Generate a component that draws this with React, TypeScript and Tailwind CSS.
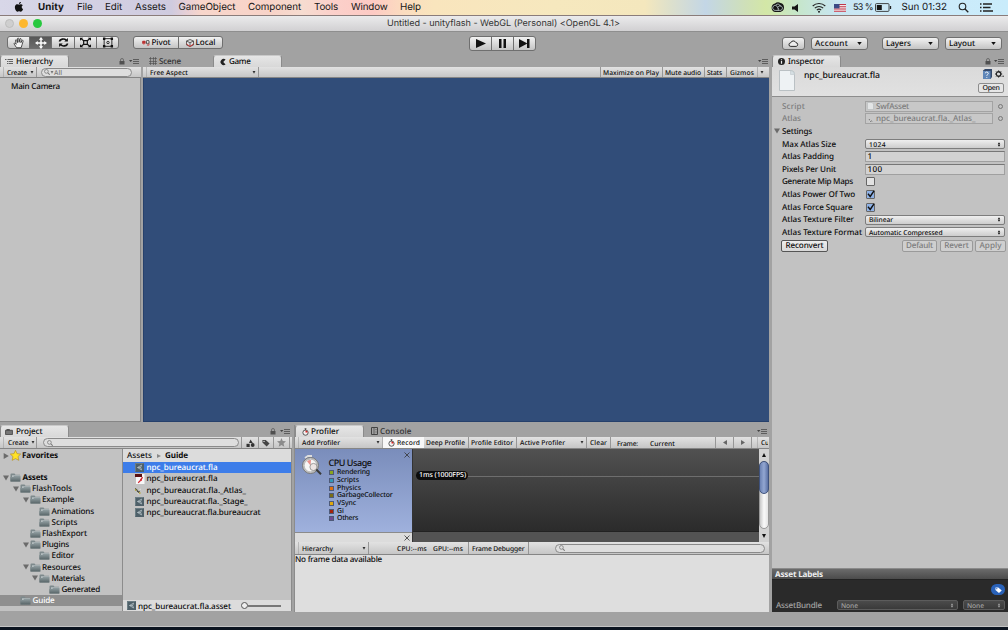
import { useLayoutEffect, useRef, useState, type ReactNode } from "react";
import clsx from "clsx";

/* One line of text whose tracking is computed so that it fills `w` pixels. */
function L({ w, children, className }: { w: number; children: string; className?: string }) {
  const ref = useRef<HTMLSpanElement>(null);
  const [gap, setGap] = useState(0);
  useLayoutEffect(() => {
    if (ref.current) {
      const natural = ref.current.getBoundingClientRect().width;
      setGap((w - natural) / children.length);
    }
  }, [w, children]);
  return (
    <span className={clsx("block shrink-0 whitespace-pre", className)} style={{ width: w, letterSpacing: gap }}>
      <span ref={ref}>{children}</span>
    </span>
  );
}

const Sep = ({ className }: { className?: string }) => (
  <i className={clsx("h-full w-px shrink-0 bg-[#969696]", className)} />
);

function Caret({ className }: { className?: string }) {
  return (
    <svg viewBox="0 0 6 5" className={clsx("h-[3px] w-[4px] shrink-0", className)}>
      <path d="M.6 0h4.800L3 4.400z" fill="#333" />
    </svg>
  );
}

function Lock({ className }: { className?: string }) {
  return (
    <svg viewBox="0 0 6 7" className={clsx("h-[7px] w-[6px] shrink-0", className)}>
      <path d="M1.500 3V2a1.500 1.500 0 0 1 3 0v1" fill="none" stroke="#666" strokeWidth=".9" />
      <rect x=".5" y="3" width="5" height="3.500" fill="#505050" />
    </svg>
  );
}

function PaneMenu({ className }: { className?: string }) {
  return (
    <svg viewBox="0 0 10 6" className={clsx("h-[6px] w-[10px] shrink-0", className)}>
      <path d="M0 2h3.400L1.700 4z" fill="#444" />
      <path d="M4 1.500h6M4 3.500h6M4 5.500h6" stroke="#555" strokeWidth=".9" />
    </svg>
  );
}

function Magnifier({ className }: { className?: string }) {
  return (
    <svg viewBox="0 0 8 8" className={clsx("h-[6px] w-[6px] shrink-0", className)}>
      <circle cx="3.200" cy="3.200" r="2.500" fill="none" stroke="#777" />
      <path d="M5 5l2.600 2.600" stroke="#777" strokeWidth="1.400" />
    </svg>
  );
}

function Tab({ children, className }: { children: ReactNode; className?: string }) {
  return (
    <div
      className={clsx(
        "flex h-full shrink-0 items-center rounded-t-[3px] border-x border-t border-[#8b8b8b] border-t-[#c9c9c9] bg-linear-to-b from-[#e6e6e6] to-[#d8d8d8]",
        className,
      )}
    >
      {children}
    </div>
  );
}

function ToolRow({ children, className }: { children?: ReactNode; className?: string }) {
  return (
    <div
      className={clsx(
        "flex shrink-0 items-center border-b border-[#858585] bg-linear-to-b from-[#e2e2e2] to-[#c6c6c6] text-[6.700px]",
        className,
      )}
    >
      {children}
    </div>
  );
}

function AppleIcon() {
  return (
    <svg viewBox="0 0 24 28" className="ml-[14px] h-[11px] w-[11px]">
      <path d="M17.2 14.9c0-2.7 2.2-4 2.3-4.1-1.300-1.800-3.200-2.100-3.900-2.100-1.700-.2-3.200 1-4.100 1-.8 0-2.100-1-3.500-.9-1.800 0-3.500 1-4.400 2.600-1.900 3.300-.5 8.100 1.300 10.800.9 1.300 2 2.700 3.400 2.700s1.900-.9 3.500-.9 2.100.9 3.500.8c1.500 0 2.400-1.300 3.300-2.600 1-1.500 1.500-2.900 1.500-3-.1 0-2.900-1.100-2.900-4.300zM14.500 7c.7-.9 1.200-2.100 1.100-3.400-1.100.1-2.400.7-3.100 1.600-.7.8-1.300 2-1.100 3.200 1.200.1 2.400-.6 3.100-1.400z" fill="#111" transform="translate(-3 -5) scale(1.2)" />
    </svg>
  );
}

function MenuBar() {
  return (
    <header className="flex h-[16px] shrink-0 items-center border-b border-[#8a7c7a] bg-[linear-gradient(90deg,#d8d7e8_0%,#cfcbdf_17%,#e6cfd6_18.5%,#f8d6cb_20%,#f8d3c8_27%,#f6dcd0_30%,#fbd0ca_33%,#fdcac4_37%,#fbdcbf_40%,#f9e5bd_43%,#f6e8be_55%,#f4e7bd_64%,#dde0cc_66.500%,#c3d6e6_70%,#cfe0b8_74%,#d3e7a6_76%,#c6e6c9_79%,#c8e6f2_83%,#cdeaf9_90%,#c9ecfb_100%)] font-['Inter'] text-[9.800px] leading-[14px] font-normal text-[#161616]">
      <AppleIcon />
      <L w={26} className="ml-[13px] font-bold">Unity</L>
      <L w={15.500} className="ml-[13px]">File</L>
      <L w={17} className="ml-[12.500px]">Edit</L>
      <L w={31} className="ml-[13px]">Assets</L>
      <L w={57} className="ml-[12.500px]">GameObject</L>
      <L w={53} className="ml-[12.500px]">Component</L>
      <L w={24} className="ml-[13px]">Tools</L>
      <L w={36.500} className="ml-[13px]">Window</L>
      <L w={21} className="ml-[12.500px]">Help</L>
      <div className="grow" />
      <svg viewBox="0 0 15 11" className="h-[11px] w-[15px]">
        <path d="M5 1.600A4.500 4.500 0 0 1 10.500 1a4.600 4.600 0 0 1-.3 9H5A4.300 4.300 0 0 1 5 1.600z" fill="#151515" />
        <path d="M9 8.400H5.200a2.500 2.500 0 1 1 1.500-4.500l2 3.200M5.800 3c2-1.600 4-.8 4.600 1.400M8 5.200c1-2.200 4.500-1.500 4.400 1-.1 1.400-1.100 2.200-2.400 2.200-1.200 0-1.800-.8-2.300-1.700" fill="none" stroke="#d6e6e6" strokeWidth=".75" />
      </svg>
      <svg viewBox="0 0 7 8" className="ml-[7px] h-[8px] w-[7px]">
        <path d="M0 2.500h2.500L6 0v8L2.500 5.500H0z" fill="#151515" />
      </svg>
      <svg viewBox="0 0 14 11" className="ml-[13px] h-[11px] w-[14px]">
        <path d="M.7 4a9 9 0 0 1 12.600 0M2.800 6.200a6 6 0 0 1 8.400 0M4.800 8.200a3.200 3.200 0 0 1 4.400 0" fill="none" stroke="#222" strokeWidth="1.100" />
        <circle cx="7" cy="9.700" r="1" fill="#222" />
      </svg>
      <svg viewBox="0 0 12 8" className="ml-[8px] h-[8px] w-[12px]">
        <path fill="#f2e8ea" d="M0 0h12v8H0z" />
        <path d="M0 .5h12M0 2.700h12M0 5h12M0 7.300h12" stroke="#c0364a" strokeWidth="1.100" />
        <path fill="#3a4a86" d="M0 0h5.500v4.400H0z" />
      </svg>
      <L w={20} className="ml-[7.500px] text-[9px]">53 %</L>
      <svg viewBox="0 0 17 9" className="ml-[2px] h-[9px] w-[17px]">
        <rect x=".5" y=".6" width="13.500" height="7.800" rx="1" fill="none" stroke="#333" strokeWidth=".9" />
        <path fill="#151515" d="M1.800 2h5v5h-5z" />
        <path d="M15.500 3v3" stroke="#222" strokeWidth="1.300" />
      </svg>
      <L w={45.500} className="ml-[9.500px]">Sun 01:32</L>
      <svg viewBox="0 0 11 11" className="ml-[11px] h-[11px] w-[11px]">
        <circle cx="4.500" cy="4.500" r="3.300" fill="none" stroke="#222" strokeWidth="1.100" />
        <path d="M7 7l3.300 3.300" stroke="#222" strokeWidth="1.300" />
      </svg>
      <svg viewBox="0 0 13 9" className="mr-[15px] ml-[11px] h-[9px] w-[13px]">
        <path d="M0 1h1.500M3 1h9M0 4.500h1.500M3 4.500h7.500M0 8h1.500M3 8h10" stroke="#222" strokeWidth="1.300" />
      </svg>
    </header>
  );
}

function TitleBar() {
  return (
    <div className="flex h-[16px] shrink-0 items-center border-b border-[#8e8e8e] bg-linear-to-b from-[#ebebec] to-[#d1d0d2] font-['Inter'] text-[9.100px] leading-[15px] font-normal text-[#333]">
      <i className="ml-[5px] size-[9px] rounded-full border border-[#bdbdbd] bg-[#cfcfcf]" />
      <i className="ml-[5px] size-[9px] rounded-full bg-[#fdb72e]" />
      <i className="ml-[5px] size-[9px] rounded-full bg-[#28c83f]" />
      <L w={233} className="ml-[345px]">Untitled - unityflash - WebGL (Personal) &lt;OpenGL 4.1&gt;</L>
    </div>
  );
}

const btnShape = "flex h-[13px] shrink-0 items-center justify-center border border-[#6f6f6f] bg-linear-to-b";
const btn = `${btnShape} from-[#f2f2f2] to-[#c4c4c4]`;

function DropButton({ label, w, className }: { label: string; w: number; className?: string }) {
  return (
    <div className={clsx(btn, "justify-between! rounded-[3px] pr-[5px] pl-[3px]", className)}>
      <L w={w}>{label}</L>
      <svg viewBox="0 0 6 4" className="h-[3px] w-[5px]"><path d="M0 0h6L3 4z" fill="#111" /></svg>
    </div>
  );
}

function Toolbar() {
  return (
    <div className="flex h-[23px] shrink-0 pt-[4px]">
      <div className="ml-[7px] flex">
        <div className={clsx(btn, "w-[23px] rounded-l-[3px]")}>
          <svg viewBox="0 0 14 14" className="size-[12px]">
            <path d="M4.200 12.500L1.400 8.300C.8 7.200 2 6.700 2.700 7.500l1 1L2.900 4c0-1 1.200-1.100 1.500-.2l.8 2.700V2c.1-1 1.500-1 1.600 0l.3 4.200L8 2.400c.2-1 1.500-.8 1.500.2L9.200 6.600l1.200-2.400c.5-.8 1.600-.3 1.400.6L10.600 9 9.500 12.500z" fill="#f4f4f4" stroke="#222" strokeWidth=".9" />
          </svg>
        </div>
        <div className={clsx(btnShape, "-ml-px w-[23px] from-[#575757] to-[#6c6c6c]")}>
          <svg viewBox="0 0 13 13" className="size-[12px]">
            <path d="M6.500 0l2.300 3H7.300v2.700H10V4.200l3 2.300-3 2.300V7.300H7.300V10h1.500l-2.300 3-2.300-3h1.500V7.300H3v1.500L0 6.500l3-2.300v1.500h2.700V3H4.200z" fill="#fff" />
          </svg>
        </div>
        <div className={clsx(btn, "-ml-px w-[24px]")}>
          <svg viewBox="0 0 12 12" className="size-[11px]">
            <path d="M1.500 5A4.300 3.600 0 0 1 9 3.500M10.500 7A4.300 3.600 0 0 1 3 8.500" fill="none" stroke="#111" strokeWidth="1.800" />
            <path d="M10.800 1v4H6.900zM1.200 11V7h3.900z" fill="#111" />
          </svg>
        </div>
        <div className={clsx(btn, "-ml-px w-[23px]")}>
          <svg viewBox="0 0 13 12" className="h-[11px] w-[13px]">
            <path d="M4.500 4h4v4h-4z" fill="none" stroke="#111" strokeWidth="1.300" />
            <path d="M2 2l2.500 2M11 2L8.500 4M2 10l2.500-2M11 10L8.500 8" stroke="#111" strokeWidth="1.300" />
            <path d="M.5.800h3.500L.5 4zM12.500.800H9L12.500 4zM.5 11.200H4L.5 8zM12.500 11.200H9L12.500 8z" fill="#111" />
          </svg>
        </div>
        <div className={clsx(btn, "-ml-px w-[23px] rounded-r-[3px]")}>
          <svg viewBox="0 0 13 12" className="h-[11px] w-[12px]">
            <path d="M2.300 1.800h8.400v8.400H2.300z" fill="none" stroke="#222" strokeWidth="1" />
            <path d="M1 .6h2.600v2.600H1zM9.400.6H12v2.600H9.400zM1 8.800h2.600v2.600H1zM9.400 8.800H12v2.600H9.400z" fill="#111" />
            <circle cx="6.500" cy="6" r="1.300" fill="none" stroke="#111" strokeWidth=".9" />
          </svg>
        </div>
      </div>
      <div className="ml-[14px] flex">
        <div className={clsx(btn, "w-[46px] rounded-l-[3px]")}>
          <svg viewBox="0 0 9 7" className="mr-[2px] h-[6px] w-[8px]">
            <rect x="0" y="1" width="4" height="3.500" rx="1" fill="#b33" />
            <rect x="5" y=".5" width="3" height="4" rx="1" fill="none" stroke="#333" />
            <path d="M2 4v1.500M8 4v2H5.500" fill="none" stroke="#c44" />
          </svg>
          <L w={19}>Pivot</L>
        </div>
        <div className={clsx(btn, "-ml-px w-[45px] rounded-r-[3px]")}>
          <svg viewBox="0 0 8 8" className="mr-[2px] size-[8px]">
            <path d="M4 .5L7.500 2v4L4 7.500.5 6V2z" fill="#ddd" stroke="#444" strokeWidth=".8" />
            <path d="M.5 2L4 3.700 7.500 2M4 3.700V7" fill="none" stroke="#444" strokeWidth=".8" />
            <path d="M.5 5L4 7.500 7.500 5" fill="none" stroke="#c33" />
          </svg>
          <L w={20}>Local</L>
        </div>
      </div>
      <div className="ml-[246px] flex">
        <div className={clsx(btn, "h-[15px]! w-[23px] rounded-l-[3px]")}>
          <svg viewBox="0 0 10 9" className="h-[9px] w-[10px]"><path d="M0 0l10 4.500L0 9z" fill="#111" /></svg>
        </div>
        <div className={clsx(btn, "-ml-px h-[15px]! w-[23px]")}>
          <svg viewBox="0 0 7 9" className="h-[9px] w-[7px]"><path d="M0 0h2.500v9H0zM4.500 0H7v9H4.500z" fill="#111" /></svg>
        </div>
        <div className={clsx(btn, "-ml-px h-[15px]! w-[23px] rounded-r-[3px]")}>
          <svg viewBox="0 0 11 9" className="h-[9px] w-[11px]"><path d="M0 0l8 4.300V0h2.500v9H8V4.700L0 9z" fill="#111" /></svg>
        </div>
      </div>
      <div className="grow" />
      <div className="mr-[6px] flex pt-px">
        <div className={clsx(btn, "w-[23px] rounded-[3px]")}>
          <svg viewBox="0 0 12 8" className="h-[7px] w-[11px]">
            <path d="M3 7.300a2 2 0 0 1-.3-4A3.300 3.300 0 0 1 8.800 3a2.200 2.200 0 0 1 .4 4.300z" fill="#eee" stroke="#222" strokeWidth="1.100" />
          </svg>
        </div>
        <DropButton label="Account" w={33} className="ml-[6px] w-[57px]" />
        <DropButton label="Layers" w={25} className="ml-[14px] w-[57px]" />
        <DropButton label="Layout" w={26} className="ml-[6px] w-[57px]" />
      </div>
    </div>
  );
}

function HierarchyPanel() {
  return (
    <section className="flex w-[141px] shrink-0 flex-col">
      <div className="flex h-[12px] shrink-0 items-center">
        <Tab className="w-[69px]">
          <svg viewBox="0 0 8 6" className="ml-[4px] h-[6px] w-[8px]">
            <path d="M0 .5h1.500M2.500 .5H8M2 2.500h1.500M4 2.500h4M2 4.500h1.500M4 4.500h4" stroke="#444" strokeWidth=".8" />
          </svg>
          <L w={37} className="ml-[3px]">Hierarchy</L>
        </Tab>
        <Lock className="ml-[50px]" />
        <PaneMenu className="ml-[4px]" />
      </div>
      <ToolRow className="h-[11px]">
        <Sep className="ml-[3px] opacity-50" />
        <L w={20} className="ml-[3px]">Create</L>
        <Caret className="ml-[3px]" />
        <Sep className="ml-[2px]" />
        <div className="ml-[4px] flex h-[9px] w-[91px] items-center rounded-full border border-[#8a8a8a] bg-[#dedede] pl-[2px] text-[#777]">
          <Magnifier />
          <Caret className="opacity-60" />
          <L w={8}>All</L>
        </div>
      </ToolRow>
      <div className="grow border-r border-b border-[#868686] bg-[#c2c2c2] pt-[4px] pl-[11px] leading-[10px]">
        <L w={49}>Main Camera</L>
      </div>
    </section>
  );
}

function GamePanel() {
  return (
    <section className="ml-[2px] flex w-[627px] shrink-0 flex-col">
      <div className="flex h-[12px] shrink-0 items-center">
        <svg viewBox="0 0 8 8" className="ml-[6px] size-[8px]">
          <path d="M1.500 0v8M4.500 0v8M6.500 0v8M0 1.500h8M0 4.500h8M0 6.500h8" stroke="#4a4a4a" strokeWidth=".6" />
        </svg>
        <L w={22} className="ml-[2px] text-[#333]">Scene</L>
        <Tab className="ml-[32px] w-[69px]">
          <svg viewBox="0 0 7 8" className="ml-[6px] h-[8px] w-[6px]">
            <path d="M6.500 1A3.700 3.700 0 1 0 6.500 7L3.800 4z" fill="#222" />
          </svg>
          <L w={21.500} className="ml-[3px]">Game</L>
        </Tab>
        <PaneMenu className="mr-[2px] ml-auto" />
      </div>
      <ToolRow className="mr-px h-[11px]">
        <Sep className="ml-[3px] opacity-50" />
        <L w={38} className="ml-[3px]">Free Aspect</L>
        <Caret className="ml-[64px]" />
        <Sep className="ml-[2px]" />
        <div className="grow" />
        <Sep />
        <L w={56} className="ml-[2px]">Maximize on Play</L>
        <Sep className="ml-[3px]" />
        <L w={36} className="ml-[2px]">Mute audio</L>
        <Sep className="ml-[3px]" />
        <L w={15} className="ml-[2px]">Stats</L>
        <Sep className="ml-[4px]" />
        <L w={24} className="ml-[3px]">Gizmos</L>
        <Sep className="ml-[3px] opacity-60" />
        <Caret className="mr-[5px] ml-[2px]" />
      </ToolRow>
      <div className="mr-px grow border-b border-l border-[#26406b] bg-[#314d79]" />
    </section>
  );
}

function Folder({ className }: { className?: string }) {
  return (
    <svg viewBox="0 0 11 9" className={clsx("h-[9px] w-[11px] shrink-0", className)}>
      <defs>
        <linearGradient id="fold" x2="0" y2="1"><stop stopColor="#93a0a3" /><stop offset="1" stopColor="#586568" /></linearGradient>
      </defs>
      <path d="M.5 1.500Q.5.500 1.500.500h3l1 1.200h4.500v6.800H.5z" fill="#7d898c" />
      <path d="M2 2.200h8v2H2z" fill="#b4bdbf" />
      <path d="M.3 4h3l1-1.200h6.200v5.700H.5z" fill="url(#fold)" />
    </svg>
  );
}

function Tri({ open, className }: { open?: boolean; className?: string }) {
  return (
    <svg viewBox="0 0 7 7" className={clsx("size-[6px] shrink-0", className)}>
      <path d={open ? "M0 .5h7L3.500 6.500z" : "M.8 0v7L6.800 3.500z"} fill="#6b6b6b" />
    </svg>
  );
}

function AssetIcon() {
  return (
    <svg viewBox="0 0 10 10" className="size-[9px] shrink-0">
      <path fill="#4e6069" d="M0 0h10v10H0z" />
      <path d="M.5 9.500v-9h9" fill="none" stroke="#7b8b93" strokeWidth=".8" />
      <path d="M7.300 2.300L2.800 5l4.500 2.700M2.800 5h3.500M7.300 2.300L6.300 5l1 2.700" fill="none" stroke="#bcc8ce" strokeWidth=".8" />
    </svg>
  );
}

function AtlasIcon() {
  return (
    <svg viewBox="0 0 9 9" className="size-[9px] shrink-0">
      <path d="M0 2.500l2 1.500 1 2.500L4.500 5" fill="none" stroke="#4a4a3a" strokeWidth="1.100" />
      <path d="M0 4h1.200M4 7h1.500" stroke="#b5a52c" strokeWidth="1.300" />
      <path d="M2 6.500l1.500 1.300M4.600 3.800l1-.6" stroke="#f4f4f4" />
    </svg>
  );
}

function SwfIcon() {
  return (
    <svg viewBox="0 0 10 10" className="h-[10px] w-[10px] shrink-0">
      <path fill="#f7f7f7" d="M1 0h8.500v10H1z" />
      <path fill="#5a1111" d="M0 0h7v3H0z" />
      <path d="M7.800 3.500C5.500 3.800 6 8 3 8.600M5 6h2" fill="none" stroke="#d3202a" strokeWidth="1.300" />
    </svg>
  );
}

const tree: { name: string; w: number; depth: number; open?: boolean }[] = [
  { name: "FlashTools", w: 40, depth: 1, open: true },
  { name: "Example", w: 32, depth: 2, open: true },
  { name: "Animations", w: 42.5, depth: 3 },
  { name: "Scripts", w: 26, depth: 3 },
  { name: "FlashExport", w: 45, depth: 2 },
  { name: "Plugins", w: 27, depth: 2, open: true },
  { name: "Editor", w: 22.5, depth: 3 },
  { name: "Resources", w: 39, depth: 2, open: true },
  { name: "Materials", w: 33, depth: 3, open: true },
  { name: "Generated", w: 38.5, depth: 4 },
];
const indent = ["", "pl-[12.5px]", "pl-[22.5px]", "pl-[32px]", "pl-[42px]"];

const files = [
  { name: "npc_bureaucrat.fla", w: 71, icon: <AssetIcon /> },
  { name: "npc_bureaucrat.fla", w: 71, icon: <SwfIcon /> },
  { name: "npc_bureaucrat.fla._Atlas_", w: 99.5, icon: <AtlasIcon /> },
  { name: "npc_bureaucrat.fla._Stage_", w: 101, icon: <AssetIcon /> },
  { name: "npc_bureaucrat.fla.bureaucrat", w: 114, icon: <AssetIcon /> },
];

function ProjectPanel() {
  return (
    <section className="flex w-[292px] shrink-0 flex-col">
      <div className="flex h-[12px] shrink-0 items-center">
        <Tab className="w-[69px]">
          <svg viewBox="0 0 9 7" className="ml-[4px] h-[6px] w-[8px]">
            <path d="M.5 1.500h8v5h-8zM2 1.500V.5h3v1" fill="#777" stroke="#444" />
          </svg>
          <L w={26.500} className="ml-[3px]">Project</L>
        </Tab>
        <Lock className="ml-[201px]" />
        <PaneMenu className="ml-[4px]" />
      </div>
      <ToolRow className="h-[12px]">
        <Sep className="ml-[3px] opacity-50" />
        <L w={20.500} className="ml-[4px]">Create</L>
        <Caret className="ml-[2px]" />
        <Sep className="ml-[1px]" />
        <div className="ml-[6px] flex h-[9px] w-[196px] items-center rounded-full border border-[#8a8a8a] bg-[#dedede] pl-[3px]">
          <Magnifier />
        </div>
        <Sep className="ml-[2px]" />
        <svg viewBox="0 0 9 8" className="ml-[4px] h-[8px] w-[9px]">
          <path d="M4.500.5l2.300 3.500H3z" fill="#333" />
          <path d="M.5 4.800h3.200V8H.5z" fill="#333" />
          <circle cx="6.700" cy="6" r="1.900" fill="#333" />
        </svg>
        <Sep className="ml-[3px]" />
        <svg viewBox="0 0 9 8" className="ml-[3px] h-[8px] w-[8px]">
          <path d="M.5.500h3.700l4.300 4L5.200 8 .5 3.500z" fill="#444" />
          <circle cx="2.300" cy="2.200" r=".8" fill="#ddd" />
        </svg>
        <Sep className="ml-[3px]" />
        <svg viewBox="0 0 10 10" className="ml-[3px] size-[9px]">
          <path d="M5 0l1.400 3.400 3.600.3-2.700 2.400.8 3.600L5 7.800 1.900 9.700l.8-3.600L0 3.700l3.600-.3z" fill="#8b8b8b" />
        </svg>
        <Sep className="ml-[3px]" />
      </ToolRow>
      <div className="flex h-[162px] shrink-0">
        <div className="flex w-[122px] shrink-0 flex-col bg-[#c2c2c2] pt-px">
          <div className="flex h-[11px] items-center pl-[3px]">
            <Tri />
            <svg viewBox="0 0 10 10" className="ml-px size-[11px]">
              <path d="M5 .3l1.400 3 3.300.4-2.400 2.300.7 3.400L5 7.800 2 9.400l.7-3.400L.3 3.700l3.300-.4z" fill="#ffe227" stroke="#b78f18" strokeWidth=".6" />
            </svg>
            <L w={36} className="ml-px font-bold">Favorites</L>
          </div>
          <div className="mt-[11px] flex h-[11.200px] items-center pl-[3px]">
            <Tri open />
            <Folder className="ml-px" />
            <L w={25} className="ml-[1.500px] font-bold">Assets</L>
          </div>
          {tree.map((t) => (
            <div key={t.name} className={clsx("flex h-[11.200px] shrink-0 items-center", indent[t.depth])}>
              <Tri open className={t.open ? "" : "invisible"} />
              <Folder className="ml-px" />
              <L w={t.w} className="ml-[1.500px]">{t.name}</L>
            </div>
          ))}
          <div className="flex h-[11px] shrink-0 items-center bg-[#8f8f8f] pl-[20px] text-white">
            <Folder />
            <L w={22} className="ml-[1.500px]">Guide</L>
          </div>
        </div>
        <div className="flex w-[170px] shrink-0 flex-col border-x border-[#8c8c8c] bg-[#c2c2c2]">
          <div className="flex h-[13px] shrink-0 items-center bg-[#dcdcdc] pl-[4px]">
            <L w={25}>Assets</L>
            <svg viewBox="0 0 4 4" className="ml-[5px] h-[4px] w-[4px]"><path d="M0 0l4 2-4 2z" fill="#888" /></svg>
            <L w={23} className="ml-[4px] font-bold">Guide</L>
          </div>
          {files.map((f, i) => (
            <div key={i} className={clsx("flex h-[11.300px] shrink-0 items-center pl-[12px]", i === 0 && "bg-[#3d7de9] text-white")}>
              {f.icon}
              <L w={f.w} className={i === 1 ? "ml-[1.500px]" : "ml-[2.500px]"}>{f.name}</L>
            </div>
          ))}
          <div className="mt-auto flex h-[11px] shrink-0 items-center bg-[#dcdcdc] pl-[4px]">
            <AssetIcon />
            <L w={93} className="ml-[2px] pt-px">npc_bureaucrat.fla.asset</L>
            <i className="ml-[10px] size-[7px] shrink-0 rounded-full border border-[#555] bg-[#eee]" />
            <i className="h-[2px] w-[33px] bg-[#777]" />
          </div>
        </div>
      </div>
    </section>
  );
}

function Stopwatch({ className }: { className?: string }) {
  return (
    <svg viewBox="0 0 8 9" className={clsx("h-[8px] w-[7px] shrink-0", className)}>
      <circle cx="4" cy="5.200" r="3" fill="#f4f4f4" stroke="#444" />
      <path d="M3 .7h2M4 1v1.500" stroke="#444" />
      <path d="M4 5.200V2.800a2.400 2.400 0 0 1 2.400 2.400z" fill="#d22" />
    </svg>
  );
}

const legend = [
  { name: "Rendering", w: 33, c: "bg-[#8aa51f]" },
  { name: "Scripts", w: 22, c: "bg-[#3398b8]" },
  { name: "Physics", w: 24, c: "bg-[#e0700e]" },
  { name: "GarbageCollector", w: 55.5, c: "bg-[#7b6d14]" },
  { name: "VSync", w: 19, c: "bg-[#dfa80d]" },
  { name: "Gi", w: 7, c: "bg-[#a3220c]" },
  { name: "Others", w: 21, c: "bg-[#704a94]" },
];

const Cross = ({ className }: { className?: string }) => (
  <svg viewBox="0 0 6 6" className={clsx("size-[6px] shrink-0", className)}>
    <path d="M.5.500l5 5M5.500.500l-5 5" stroke="#333" strokeWidth=".8" />
  </svg>
);

function ProfilerPanel() {
  return (
    <section className="ml-[2px] flex w-[475px] shrink-0 flex-col border-l border-[#8c8c8c]">
      <div className="flex h-[12px] shrink-0 items-center">
        <Tab className="w-[69px]">
          <Stopwatch className="ml-[6px]" />
          <L w={28} className="ml-[2px]">Profiler</L>
        </Tab>
        <svg viewBox="0 0 7 8" className="ml-[7px] h-[8px] w-[7px]">
          <path d="M.5.500h6v7h-6z" fill="none" stroke="#444" />
          <path d="M3 .5v7M4.500 2.500h1M4.500 5h1" stroke="#444" strokeWidth=".7" />
        </svg>
        <L w={31.500} className="ml-[2px] text-[#333]">Console</L>
        <PaneMenu className="mr-[2px] ml-auto" />
      </div>
      <ToolRow className="h-[12px]">
        <Sep className="ml-[3px] opacity-50" />
        <L w={38} className="ml-[3px]">Add Profiler</L>
        <Caret className="ml-[36px]" />
        <Sep className="ml-[2px] opacity-60" />
        <div className="flex h-full w-[41px] shrink-0 items-center bg-[#f8f8f8]">
          <Stopwatch className="ml-[5px]" />
          <L w={23} className="ml-[2px]">Record</L>
        </div>
        <L w={39} className="ml-[2px]">Deep Profile</L>
        <Sep className="ml-[3px]" />
        <L w={42} className="ml-[2px]">Profile Editor</L>
        <Sep className="ml-[3px]" />
        <L w={45} className="ml-[3px]">Active Profiler</L>
        <Caret className="ml-[15px]" />
        <Sep className="ml-[2px]" />
        <L w={17} className="ml-[3px]">Clear</L>
        <Sep className="ml-[3px]" />
        <L w={21} className="ml-[6px] pt-px">Frame:</L>
        <L w={25} className="ml-[12px] pt-px">Current</L>
        <Sep className="ml-[40px]" />
        <svg viewBox="0 0 4 5" className="ml-[7px] h-[5px] w-[4px]"><path d="M4 0v5L0 2.500z" fill="#666" /></svg>
        <Sep className="ml-[6px]" />
        <svg viewBox="0 0 4 5" className="ml-[7px] h-[5px] w-[4px]"><path d="M0 0v5l4-2.500z" fill="#666" /></svg>
        <Sep className="ml-[6px]" />
        <Sep className="ml-[5px] opacity-50" />
        <L w={8} className="ml-[3px] max-w-[7px] overflow-hidden">Cu</L>
      </ToolRow>
      <div className="flex h-[93px] shrink-0">
        <div className="flex w-[118px] shrink-0 flex-col border-r border-[#333]">
          <div className="flex h-[83px] bg-linear-to-b from-[#7a8dbb] to-[#9fb1dd]">
            <svg viewBox="0 0 22 22" className="mt-[6px] ml-[6px] size-[22px] shrink-0">
              <path d="M4 3l3-2 4 0" fill="none" stroke="#ddd" strokeWidth="2" />
              <circle cx="9.500" cy="10.500" r="8" fill="#c6c6c6" stroke="#777" />
              <circle cx="9.500" cy="10.500" r="6.300" fill="#f6f6f6" stroke="#999" strokeWidth=".5" />
              <path d="M9.500 10.500L6 6.200a5.500 5.500 0 0 1 4-1.200z" fill="#e8918c" />
              <circle cx="12.500" cy="12" r="3.600" fill="#e9dedd" fillOpacity=".7" stroke="#888" strokeWidth=".8" />
              <path d="M15.300 14.500l4.700 4.700" stroke="#3a3a3a" strokeWidth="2" />
            </svg>
            <div className="ml-[5.500px] pt-[9px] text-[6.900px]">
              <L w={43} className="mb-px text-[9px] leading-[10px]">CPU Usage</L>
              {legend.map((l) => (
                <div key={l.name} className="flex h-[7.700px] items-center">
                  <i className={clsx("size-[5px] shrink-0 border border-[#4e5a78]", l.c)} />
                  <L w={l.w} className="ml-[3.500px] leading-[7px]">{l.name}</L>
                </div>
              ))}
            </div>
            <Cross className="mt-[3px] mr-[2px] ml-auto" />
          </div>
          <div className="flex h-[10px] items-center justify-end border-t border-[#8b8b8b] bg-[#dcdcdc] pr-[2px]">
            <Cross />
          </div>
        </div>
        <div className="flex w-[346px] shrink-0 flex-col">
          <div className="flex h-[83px] border-b border-[#222] bg-linear-to-b from-[#515151] to-[#2b2b2b] pt-[22px]">
            <div className="ml-[3px] flex h-[9px] w-[52px] shrink-0 items-center rounded-full bg-[#0c0c0c] pl-[3px] text-[7px] text-white">
              <L w={47}>1ms (1000FPS)</L>
            </div>
            <i className="mt-[5px] h-px grow bg-[#6e6e6e]" />
          </div>
          <div className="h-[10px] bg-[#535353]" />
        </div>
        <div className="flex w-[10px] shrink-0 flex-col items-center bg-[#d2d2d2]">
          <svg viewBox="0 0 4 4" className="mt-[4px] mb-[4px] size-[4px] shrink-0"><path d="M0 4h4L2 0z" fill="#111" /></svg>
          <div className="w-[10px] grow rounded-full border border-[#999] bg-linear-to-r from-[#c9c9c9] via-[#fafafa] to-[#e4e4e4]">
            <div className="-mt-px -ml-px h-[33px] w-[10px] rounded-full border border-[#3f527c] bg-linear-to-r from-[#6c82b3] via-[#93a7d2] to-[#5b71a3]" />
          </div>
          <svg viewBox="0 0 4 4" className="mt-[5px] mb-[4px] size-[4px] shrink-0"><path d="M0 0h4L2 4z" fill="#111" /></svg>
        </div>
      </div>
      <ToolRow className="h-[13px]">
        <Sep className="ml-[3px] opacity-50" />
        <L w={31} className="ml-[3px]">Hierarchy</L>
        <Caret className="ml-[29px]" />
        <Sep className="ml-[2px]" />
        <L w={30} className="ml-[28px] pt-px">CPU:--ms</L>
        <L w={30} className="ml-[6px] pt-px">GPU:--ms</L>
        <Sep className="ml-[5px]" />
        <L w={52.500} className="ml-[3px]">Frame Debugger</L>
        <Sep className="ml-[3px]" />
        <div className="ml-[26px] flex h-[9px] w-[210px] items-center rounded-full border border-[#8a8a8a] bg-[#dedede] pl-[3px]">
          <Magnifier />
        </div>
      </ToolRow>
      <div className="grow bg-[#dedede] leading-[9px]">
        <L w={87}>No frame data available</L>
      </div>
    </section>
  );
}

function Updown() {
  return (
    <svg viewBox="0 0 4 7" className="h-[5px] w-[4px]">
      <path d="M.3 3L2 .3 3.700 3zM.3 4L2 6.700 3.700 4z" fill="currentColor" />
    </svg>
  );
}

function Field({ label, w, dim, children }: { label: string; w: number; dim?: boolean; children?: ReactNode }) {
  return (
    <div className={clsx("flex h-[12.600px] shrink-0 items-center", dim && "text-[#7c7c7c]")}>
      <div className="w-[83px] shrink-0"><L w={w}>{label}</L></div>
      {children}
    </div>
  );
}

const Popup = ({ v, w }: { v: string; w: number }) => (
  <div className="flex h-[10px] w-[140px] items-center justify-between rounded-[2px] border border-[#7d7d7d] bg-linear-to-b from-[#efefef] to-[#cdcdcd] pr-[3px] pl-[3px] text-[6.700px]">
    <L w={w}>{v}</L>
    <Updown />
  </div>
);

const Input = ({ v, w }: { v: string; w: number }) => (
  <div className="flex h-[11px] w-[140px] items-center border border-[#a0a0a0] border-t-[#777] bg-[#d2d2d2] pl-[1.500px]"><L w={w}>{v}</L></div>
);

const ObjectBox = ({ v, w, icon }: { v: string; w: number; icon: ReactNode }) => (
  <>
    <div className="flex h-[11px] w-[128px] items-center border border-[#a3a3a3] bg-[#c8c8c8] pl-px">
      {icon}
      <L w={w} className="ml-[2px]">{v}</L>
    </div>
    <i className="ml-[5px] size-[5px] rounded-full border border-[#777]" />
  </>
);

const Check = ({ on }: { on?: boolean }) => (
  <div className={clsx("ml-px flex size-[9px] items-center justify-center rounded-[1px] border border-[#666]", on ? "bg-[#8fb2e6]" : "bg-[#e2e2e2]")}>
    {on && (
      <svg viewBox="0 0 8 8" className="size-[8px] shrink-0"><path d="M1 3.800l2.200 2.700L7 .8" fill="none" stroke="#111" strokeWidth="1.400" /></svg>
    )}
  </div>
);

const smallBtn = "flex h-[12px] shrink-0 items-center justify-center rounded-[2px] border";

function InspectorPanel() {
  return (
    <section className="ml-[2px] flex w-[236px] shrink-0 flex-col">
      <div className="flex h-[12px] shrink-0 items-center">
        <Tab className="w-[69px]">
          <svg viewBox="0 0 7 7" className="ml-[5px] size-[7px]">
            <circle cx="3.500" cy="3.500" r="3.500" fill="#222" />
            <path d="M3.500 1.300v1M3.500 3v2.800" stroke="#eee" strokeWidth="1.200" />
          </svg>
          <L w={36} className="ml-[3px]">Inspector</L>
        </Tab>
        <Lock className="ml-[144px]" />
        <PaneMenu className="ml-[3px]" />
      </div>
      <div className="flex h-[30px] shrink-0 border-b border-[#8d8d8d] bg-linear-to-b from-[#dadada] to-[#e1e1e1]">
        <svg viewBox="0 0 16 21" className="mt-[3px] ml-[7px] h-[21px] w-[16px] shrink-0">
          <path d="M.5.500h12q3 .5 3 4v16H.5z" fill="#eef2f4" stroke="#aeb6ba" strokeWidth=".8" />
          <path d="M11.500.500v4h4q0-3.500-4-4z" fill="#d5dee2" stroke="#b9c1c5" strokeWidth=".5" />
        </svg>
        <L w={76} className="mt-[2px] ml-[9px] text-[8.700px] leading-[12px]">npc_bureaucrat.fla</L>
        <div className="mr-[4px] ml-auto flex flex-col items-end">
          <div className="mt-[2px] flex h-[10px] items-center">
            <svg viewBox="0 0 10 10" className="size-[10px]">
              <path d="M1 1.500L3 0h7v8L8.500 10H1z" fill="#34496a" />
              <path d="M1 2h7.500v8H1z" fill="#5f86b8" />
              <path d="M3.300 4.300c0-1.800 3-1.600 3 .1 0 1.100-1.500 1.100-1.500 2.400M4.800 8v.9" fill="none" stroke="#fff" strokeWidth=".9" />
            </svg>
            <svg viewBox="0 0 10 8" className="ml-[3px] h-[8px] w-[9px]">
              <circle cx="4" cy="4" r="2.500" fill="none" stroke="#222" strokeWidth="1.400" />
              <path d="M4 0v1.500M4 6.500V8M0 4h1.500M6.500 4H8M1.200 1.200l1 1M5.800 5.800l1 1M6.800 1.200l-1 1M2.200 5.800l-1 1" stroke="#222" />
              <circle cx="9" cy="6.500" r=".8" fill="#222" />
            </svg>
          </div>
          <div className={clsx(smallBtn, "mt-[4px] h-[10px]! w-[26px] border-[#8d8d8d] bg-[#e6e6e6] text-[7px]")}>
            <L w={17}>Open</L>
          </div>
        </div>
      </div>
      <div className="flex grow flex-col bg-[#c2c2c2] pt-[3px] pl-[10px]">
        <Field label="Script" w={23} dim>
          <ObjectBox v="SwfAsset" w={33} icon={<svg viewBox="0 0 7 8" className="h-[8px] w-[7px]"><path d="M.5.500h4.500l1.500 1.500v5.500h-6z" fill="#e3e5e6" stroke="#b5b9bb" strokeWidth=".6" /></svg>} />
        </Field>
        <Field label="Atlas" w={19} dim>
          <ObjectBox v="npc_bureaucrat.fla._Atlas_" w={99.500} icon={<svg viewBox="0 0 7 8" className="h-[8px] w-[7px]"><path d="M2 4l1 1.500 1 1.500M4.500 5.500l.5 1" fill="none" stroke="#777" /><path d="M2.500 6l1-.5" stroke="#eee" /></svg>} />
        </Field>
        <div className="-ml-[8px] flex h-[12.600px] shrink-0 items-center">
          <Tri open />
          <L w={30} className="ml-[2px]">Settings</L>
        </div>
        <Field label="Max Atlas Size" w={54}><Popup v="1024" w={17} /></Field>
        <Field label="Atlas Padding" w={52}><Input v="1" w={4} /></Field>
        <Field label="Pixels Per Unit" w={54}><Input v="100" w={15} /></Field>
        <Field label="Generate Mip Maps" w={71}><Check /></Field>
        <Field label="Atlas Power Of Two" w={73}><Check on /></Field>
        <Field label="Atlas Force Square" w={70.500}><Check on /></Field>
        <Field label="Atlas Texture Filter" w={72}><Popup v="Bilinear" w={24} /></Field>
        <Field label="Atlas Texture Format" w={80}><Popup v="Automatic Compressed" w={73.500} /></Field>
        <div className="-ml-px flex pt-px">
          <div className={clsx(smallBtn, "w-[47px] border-[#555] bg-linear-to-b from-[#eee] to-[#d8d8d8]")}><L w={38}>Reconvert</L></div>
          <div className={clsx(smallBtn, "ml-[74px] w-[35px] border-[#9a9a9a] bg-[#cfcfcf] text-[#7c7c7c]")}><L w={27}>Default</L></div>
          <div className={clsx(smallBtn, "ml-[3px] w-[33px] border-[#9a9a9a] bg-[#cfcfcf] text-[#7c7c7c]")}><L w={24.500}>Revert</L></div>
          <div className={clsx(smallBtn, "ml-[2px] w-[31px] border-[#9a9a9a] bg-[#cfcfcf] text-[#7c7c7c]")}><L w={22}>Apply</L></div>
        </div>
      </div>
      <div className="flex h-[12px] shrink-0 items-center border-y border-t-[#8a8a8a] border-b-[#222] bg-linear-to-b from-[#6b6b6b] to-[#4b4b4b] pl-[3px] font-bold text-[#eee]">
        <L w={48}>Asset Labels</L>
      </div>
      <div className="flex h-[32px] shrink-0 flex-col bg-[#2a2a2a]">
        <div className="mt-[4px] mr-[3px] flex h-[11px] w-[14px] shrink-0 items-center justify-center self-end rounded-full bg-[#2a62b8]">
          <svg viewBox="0 0 8 7" className="h-[6px] w-[7px]"><path d="M.5.500h3.300l4 3.500L4.500 7 .5 3.500z" fill="#fff" /><circle cx="2" cy="2" r=".7" fill="#2a62b8" /></svg>
        </div>
        <div className="mt-[5px] flex items-center pl-[4px] text-[#a2a2a2]">
          <L w={46}>AssetBundle</L>
          <div className="ml-[15px] flex h-[10px] w-[121px] shrink-0 items-center justify-between rounded-[2px] border border-[#5c5c5c] bg-linear-to-b from-[#4b4b4b] to-[#3a3a3a] px-[3px] text-[6.700px]">
            <L w={17}>None</L><Updown />
          </div>
          <div className="ml-[5px] flex h-[10px] w-[42px] shrink-0 items-center justify-between rounded-[2px] border border-[#5c5c5c] bg-linear-to-b from-[#4b4b4b] to-[#3a3a3a] px-[3px] text-[6.700px]">
            <L w={17}>None</L><Updown />
          </div>
        </div>
      </div>
    </section>
  );
}

export default function App() {
  return (
    <div className="flex h-[630px] w-[1008px] flex-col overflow-hidden bg-[#0c1420] font-['Noto_Sans',sans-serif] text-[8.100px] leading-[9px] font-medium text-[#0c0c0c] [text-rendering:geometricPrecision]">
      <MenuBar />
      <TitleBar />
      <div className="flex h-[595px] shrink-0 flex-col border-b border-[#c4c4c4] bg-[#a2a2a2]">
        <Toolbar />
        <main className="flex h-[557px] shrink-0">
          <div className="flex w-[770px] shrink-0 flex-col">
            <div className="flex h-[367px] shrink-0">
              <HierarchyPanel />
              <GamePanel />
            </div>
            <div className="mt-[3px] flex h-[187px] shrink-0">
              <ProjectPanel />
              <ProfilerPanel />
            </div>
          </div>
          <InspectorPanel />
        </main>
      </div>
    </div>
  );
}
